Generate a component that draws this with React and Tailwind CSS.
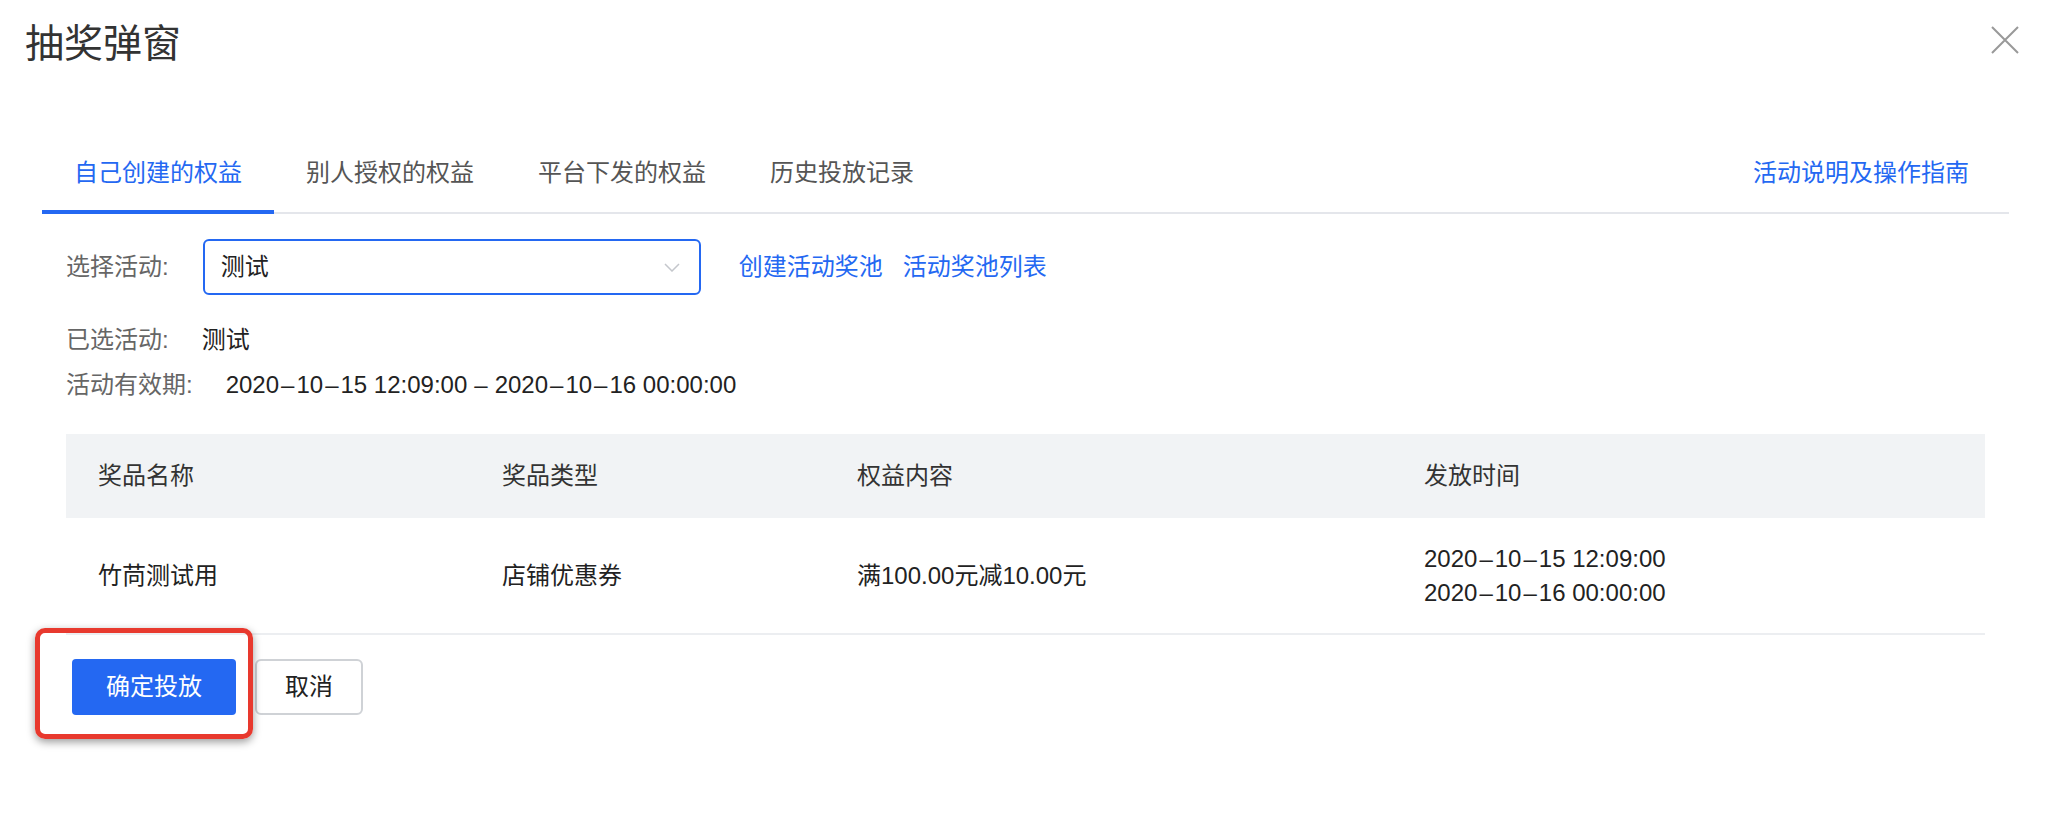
import React from "react";

const tabs = ["自己创建的权益", "别人授权的权益", "平台下发的权益", "历史投放记录"];

function DateText({ text }) {
  const parts = text.split("-");
  return (
    <span>
      {parts.map((p, i) => (
        <React.Fragment key={i}>
          {i > 0 && <span className="mx-[2px]">–</span>}
          {p}
        </React.Fragment>
      ))}
    </span>
  );
}

export default function App() {
  return (
    <div className="relative w-[2054px] h-[814px] bg-white font-['Liberation_Sans','Noto_Sans_CJK_SC',sans-serif] text-[#333]">
      {/* header */}
      <div className="pt-[16px] pl-[25px]">
        <h1 className="text-[39px] leading-[56px] text-[#333] font-normal">抽奖弹窗</h1>
      </div>
      <button className="absolute top-[26px] right-[35px] w-[28px] h-[28px]" aria-label="close">
        <svg viewBox="0 0 28 28" width="28" height="28" fill="none" stroke="#999" strokeWidth="2">
          <path d="M1 1 L27 27 M27 1 L1 27" />
        </svg>
      </button>

      <div className="ml-[42px] mr-[45px] mt-[84px]">
        {/* tabs */}
        <div className="flex items-start border-b-2 border-[#e4e6eb]">
          {tabs.map((t, i) =>
            i === 0 ? (
              <div
                key={t}
                className="px-[32px] pb-[20px] text-[24px] leading-[34px] text-[#2468f2] border-b-4 border-[#2468f2] -mb-[2px]"
              >
                {t}
              </div>
            ) : (
              <div key={t} className="px-[32px] pb-[20px] text-[24px] leading-[34px] text-[#555]">
                {t}
              </div>
            )
          )}
          <div className="ml-auto mr-[40px] text-[24px] leading-[34px] text-[#2468f2]">活动说明及操作指南</div>
        </div>

        <div className="px-[24px]">
          {/* select row */}
          <div className="mt-[25px] flex items-center text-[24px]">
            <span className="text-[#666] mr-[34px] leading-[34px]">选择活动:</span>
            <div className="w-[498px] h-[56px] rounded-[6px] border-2 border-[#2468f2] flex items-center justify-between pl-[16px] pr-[19px]">
              <span className="text-[#222] leading-[34px]">测试</span>
              <svg width="16" height="9" viewBox="0 0 16 9" fill="none" stroke="#c4c7cc" strokeWidth="1.5">
                <path d="M1 1 L8 8 L15 1" />
              </svg>
            </div>
            <span className="ml-[38px] text-[#2468f2] leading-[34px]">创建活动奖池</span>
            <span className="ml-[20px] text-[#2468f2] leading-[34px]">活动奖池列表</span>
          </div>

          {/* info rows */}
          <div className="mt-[28px] flex text-[24px] leading-[34px]">
            <span className="text-[#666] mr-[33px]">已选活动:</span>
            <span className="text-[#222]">测试</span>
          </div>
          <div className="mt-[11px] flex text-[24px] leading-[34px]">
            <span className="text-[#666] mr-[33px]">活动有效期:</span>
            <span className="text-[#222]">
              <DateText text="2020-10-15 12:09:00" />
              <span className="mx-[7px]">–</span>
              <DateText text="2020-10-16 00:00:00" />
            </span>
          </div>

          {/* table */}
          <div className="mt-[32px] text-[24px] leading-[34px]">
            <div className="grid grid-cols-[404px_355px_567px_1fr] h-[84px] items-center bg-[#f1f3f5] text-[#333]">
              <div className="pl-[32px]">奖品名称</div>
              <div className="pl-[32px]">奖品类型</div>
              <div className="pl-[32px]">权益内容</div>
              <div className="pl-[32px]">发放时间</div>
            </div>
            <div className="grid grid-cols-[404px_355px_567px_1fr] h-[117px] items-center border-b-2 border-[#eceef1] text-[#222]">
              <div className="pl-[32px]">竹苘测试用</div>
              <div className="pl-[32px]">店铺优惠券</div>
              <div className="pl-[32px]">满100.00元减10.00元</div>
              <div className="pl-[32px] flex flex-col">
                <DateText text="2020-10-15 12:09:00" />
                <DateText text="2020-10-16 00:00:00" />
              </div>
            </div>
          </div>

          {/* buttons */}
          <div className="relative mt-[24px] ml-[6px] flex gap-[19px]">
            <button className="w-[164px] h-[56px] rounded-[4px] bg-[#2468f2] text-white text-[24px] leading-[34px]">
              确定投放
            </button>
            <button className="w-[108px] h-[56px] rounded-[6px] border-2 border-[#cfd2d6] bg-white text-[#222] text-[24px] leading-[34px]">
              取消
            </button>
            <div className="absolute left-[-37px] top-[-31px] w-[218px] h-[111px] rounded-[10px] border-[5px] border-[#e8392e] shadow-[0_3px_8px_rgba(0,0,0,0.4)] pointer-events-none" />
          </div>
        </div>
      </div>
    </div>
  );
}
